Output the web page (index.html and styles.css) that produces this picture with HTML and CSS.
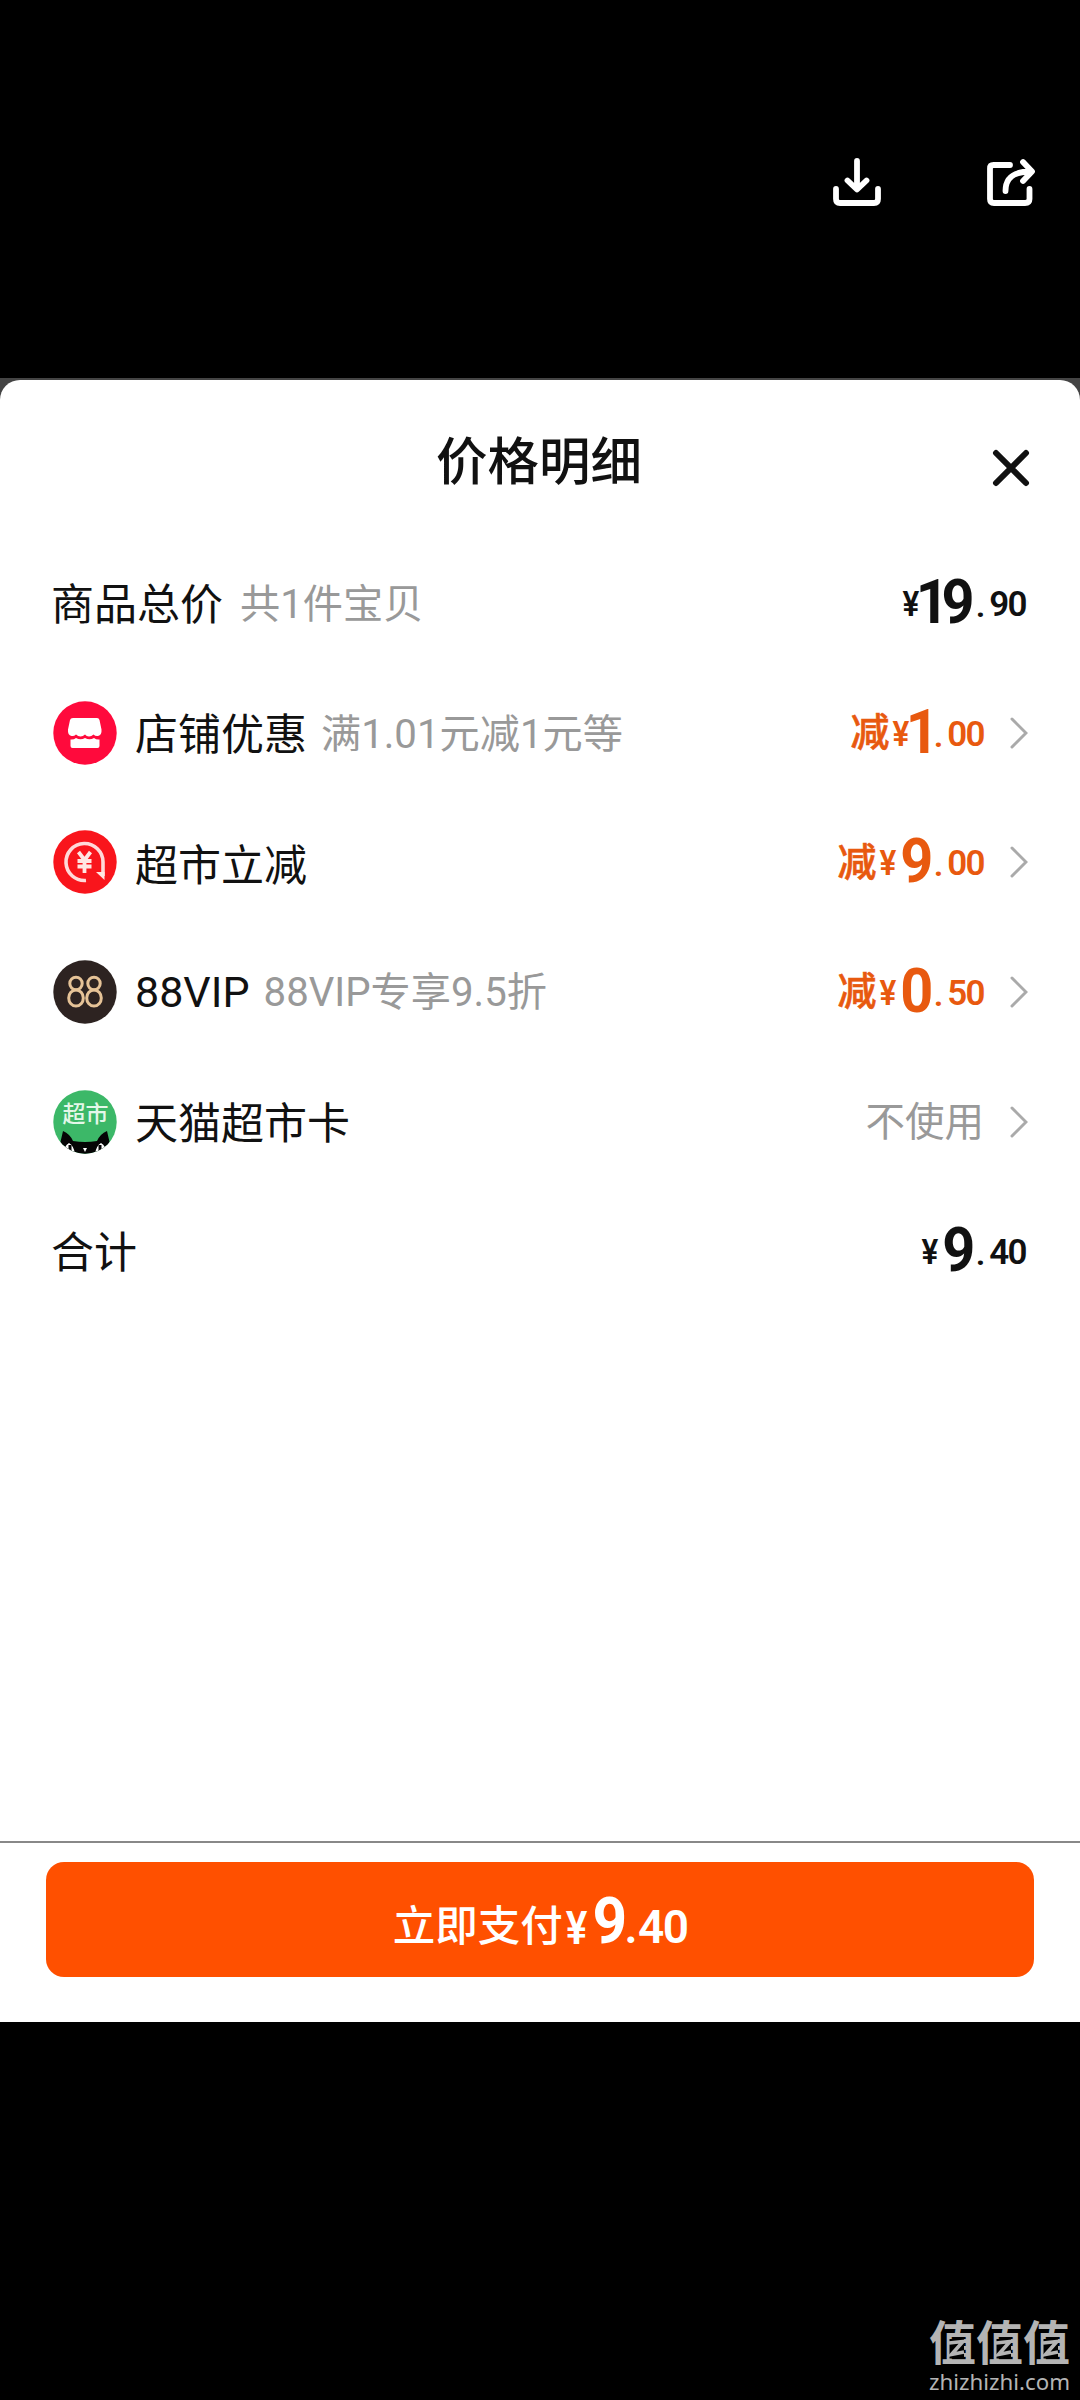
FILE: index.html
```html
<!DOCTYPE html>
<html lang="zh-CN">
<head>
<meta charset="utf-8">
<title>价格明细</title>
<link rel="stylesheet" href="styles.css">
</head>
<body>
<div class="screen">
  <header class="toolbar">
    <svg class="tool" viewBox="0 0 48 48"><path d="M24 4v28M14.500 23.500 24 32.500l9.500-9M3 32v10q0 4 4 4h34q4 0 4-4V32"/></svg>
    <svg class="tool" viewBox="0 0 48 48"><path d="M23 8H6.500Q3 8 3 11.500v30.500q0 4 4 4h31q4.500 0 4.500-4V32M18.500 34C18.500 21 26 14.500 44 14.500M36 5l9 9.500-9 9.500"/></svg>
  </header>
  <div class="backdrop">
  <main class="sheet">
    <div class="heading">
      <h1 class="title">价格明细</h1>
      <svg class="close" viewBox="0 0 38 38"><path d="M4 4l30 30M34 4 4 34"/></svg>
    </div>
    <div class="rows">
      <div class="row">
        <span class="label edge">商品总价</span><span class="note">共1件宝贝</span>
        <span class="price"><i class="yen">¥</i><b class="int pair">19</b><i class="dot">.</i><i class="dec">90</i></span>
      </div>
      <div class="row">
        <svg class="icon" viewBox="0 0 64 64"><circle cx="32" cy="32" r="31.700" fill="#ff0a3c"/><path d="M20 17h24q2 0 2.500 2l2 9.500q.5 5.500-3.500 6.500-2.500.5-4.500-1.500-2 2-4.500 2t-4-2q-2 2-4.500 2t-4.500-2q-2 2-4.500 1.500-4-1-3.500-6.500l2-9.500q.5-2 3-2z" fill="#fff"/><path d="M17.500 38.500q3 .5 5.500-1.500 4.500 2.500 9 0 4.500 2.500 9 0 2.500 2 5.500 1.500V45q0 2-2 2h-25q-2 0-2-2z" fill="#fff"/></svg>
        <span class="label">店铺优惠</span><span class="note">满1.01元减1元等</span>
        <span class="price off"><em class="cut">减</em><i class="yen">¥</i><b class="int slim">1</b><i class="dot">.</i><i class="dec">00</i></span>
        <svg class="chevron" viewBox="0 0 18 32"><path d="M2 2l14 14L2 30"/></svg>
      </div>
      <div class="row">
        <svg class="icon" viewBox="0 0 64 64"><circle cx="32" cy="32" r="31.700" fill="#f9151c"/><path d="M33 50.500A18.500 18.500 0 1 1 50 32v14" fill="none" stroke="#ffd9d9" stroke-width="3.600"/><path d="M43 42h8.500v8z" fill="#ffe6e2"/><path d="M25.500 22l6 8 6-8M31.500 30v13M24.500 31h14M24.500 36.500h14" fill="none" stroke="#ffe6e2" stroke-width="3.800"/></svg>
        <span class="label low">超市立减</span>
        <span class="price off"><em class="cut">减</em><i class="yen">¥</i><b class="int">9</b><i class="dot">.</i><i class="dec">00</i></span>
        <svg class="chevron" viewBox="0 0 18 32"><path d="M2 2l14 14L2 30"/></svg>
      </div>
      <div class="row">
        <svg class="icon" viewBox="0 0 64 64"><circle cx="32" cy="32" r="31.700" fill="#2d2321"/><g fill="none" stroke="#e6c397" stroke-width="3"><ellipse cx="23" cy="23.500" rx="6.200" ry="6.300"/><ellipse cx="23" cy="38" rx="7.300" ry="8"/><ellipse cx="41" cy="23.500" rx="6.200" ry="6.300"/><ellipse cx="41" cy="38" rx="7.300" ry="8"/></g></svg>
        <span class="label latin">88VIP</span><span class="note">88VIP专享9.5折</span>
        <span class="price off"><em class="cut">减</em><i class="yen">¥</i><b class="int">0</b><i class="dot">.</i><i class="dec">50</i></span>
        <svg class="chevron" viewBox="0 0 18 32"><path d="M2 2l14 14L2 30"/></svg>
      </div>
      <div class="row">
        <svg class="icon" viewBox="0 0 64 64"><defs><clipPath id="round"><circle cx="32" cy="32" r="31.700"/></clipPath></defs><g clip-path="url(#round)"><rect width="64" height="64" fill="#3cb868"/><path d="M7 54 10 41q7 3 10 10 12 2 24 0 3-7 10-10l3 13v10H7z" fill="#050505"/><path d="M10 64q1-8 6-11 5 3 6 11zM42 64q1-8 6-11 5 3 6 11z" fill="#fff"/><path d="M15.500 55h3v9h-3zM45.500 55h3v9h-3z" fill="#050505"/><path d="M30 58h4l-2 4z" fill="#fff"/></g><text class="badge-text" x="32.500" y="32" text-anchor="middle">超市</text></svg>
        <span class="label">天猫超市卡</span>
        <span class="unused">不使用</span>
        <svg class="chevron" viewBox="0 0 18 32"><path d="M2 2l14 14L2 30"/></svg>
      </div>
      <div class="row">
        <span class="label edge">合计</span>
        <span class="price"><i class="yen">¥</i><b class="int">9</b><i class="dot">.</i><i class="dec">40</i></span>
      </div>
    </div>
    <footer class="footer">
      <button class="pay"><span class="pay-label">立即支付</span><i class="yen">¥</i><b class="int">9</b><i class="dot">.</i><i class="dec">40</i></button>
    </footer>
  </main>
  </div>
  <div class="watermark">
    <div class="brand">值值值
      <svg class="marks" viewBox="0 0 141 50"><g id="z"><path d="M20.500 20h14.500v19.500H20.500z" fill="#000"/><path d="M20 24l14-1.500L22.500 35.500 35 33" fill="none" stroke="#b4b4b4" stroke-width="3.600"/></g><use href="#z" x="47"/><use href="#z" x="94"/></svg>
    </div>
    <span class="site">zhizhizhi.com</span>
  </div>
</div>
</body>
</html>
```
FILE: styles.css
```css
* { box-sizing: border-box; }
body { margin: 0; background: #000; }
i, em { font-style: normal; }

.screen {
  width: 1080px;
  height: 2400px;
  display: flex;
  flex-direction: column;
  overflow: hidden;
  background: #000;
  font-family: Roboto, "Noto Sans CJK SC", sans-serif;
}
.toolbar {
  height: 378px;
  padding: 157px 45px 0 0;
  display: flex;
  justify-content: flex-end;
  gap: 106px;
}
.tool { width: 48px; height: 48px; overflow: visible; fill: none; stroke: #fff; stroke-width: 5.8px; stroke-linecap: round; stroke-linejoin: round; }

.backdrop { background: #444; padding-top: 2px; height: 1644px; }
.sheet { height: 1642px; background: #fff; border-radius: 20px 20px 0 0; display: flex; flex-direction: column; }
.heading {
  height: 158px;
  padding: 0 50px 0 48px;
  display: grid;
  grid-template-columns: 38px 1fr 38px;
  align-items: center;
}
.title { grid-column: 2; margin: 8px 0 0; text-align: center; font-size: 51.500px; line-height: 60px; font-weight: 500; color: #111; }
.close { width: 38px; height: 38px; margin-top: 18px; fill: none; stroke: #111; stroke-width: 6px; stroke-linecap: round; }

.rows { flex: 1; display: flex; flex-direction: column; padding: 0 52px 0 53px; }
.row { height: 129.7px; display: flex; align-items: center; }
.icon { width: 64px; height: 64px; margin-right: 18px; flex: none; }
.badge-text { font-family: "Noto Sans CJK SC", sans-serif; font-size: 23px; font-weight: 500; fill: #e4f7e9; }
.label { margin-top: 4px; font-size: 43px; line-height: 60px; color: #111; white-space: nowrap; }
.edge { margin-left: -2px; }
.low { margin-top: 7px; }
.latin { margin-top: 0; }
.note { margin: 5px 0 0 14px; font-size: 40.200px; line-height: 60px; color: #999; white-space: nowrap; }
.edge + .note { margin-left: 17px; }
.latin + .note { margin-top: 3px; }

.price { margin-left: auto; padding-right: 2px; display: flex; align-items: center; color: #111; font-weight: 600; }
.yen { width: 20px; font-size: 35px; line-height: 40px; margin-top: 4px; display: flex; justify-content: center; transform: scaleX(.9); }
.int { font-size: 62px; line-height: 62px; font-weight: 700; letter-spacing: -3px; margin-top: -2px; transform: scaleX(.93); transform-origin: right center; }
.slim { letter-spacing: -9px; margin-left: -7px; }
.pair { letter-spacing: -8px; margin: -2px 5px 0 -9px; }
.dot { width: 17px; font-size: 34px; line-height: 40px; margin-top: 4px; display: flex; justify-content: center; }
.dec { font-size: 35px; line-height: 40px; margin-top: 4px; letter-spacing: -1.600px; }
.off { color: #e8590f; padding-right: 0; }
.cut { font-size: 39px; line-height: 40px; margin: 1px 1px 0 0; font-weight: 500; -webkit-text-stroke: .6px currentColor; }
.unused { margin: 2px 0 0 auto; font-size: 39.500px; line-height: 60px; color: #999; }
.chevron { width: 18px; height: 32px; margin-left: 26px; flex: none; fill: none; stroke: #aaa; stroke-width: 3px; stroke-linecap: round; }

.footer { height: 181px; padding: 19px 46px 0; border-top: 2px solid #888; }
.pay {
  width: 100%;
  height: 115px;
  padding: 0;
  border: 0;
  border-radius: 18px;
  display: flex;
  align-items: center;
  justify-content: center;
  background: #ff5000;
  color: #fff;
  font-family: inherit;
  font-weight: 600;
}
.pay-label { font-size: 42.500px; line-height: 60px; font-weight: 500; margin-top: 15px; }
.pay .yen { width: 27px; font-size: 46px; margin-top: 16px; transform: scaleX(.88); }
.pay .int { font-size: 65px; margin-top: 2px; }
.pay .dot { font-size: 46px; width: 14px; margin-top: 15px; }
.pay .dec { font-size: 46px; margin-top: 15px; }

.watermark { flex: 1; padding: 0 10px 5px 0; display: flex; flex-direction: column; align-items: flex-end; justify-content: flex-end; color: #b4b4b4; }
.brand { position: relative; font-size: 47px; line-height: 50px; font-weight: 700; }
.marks { position: absolute; left: 0; top: 0; width: 141px; height: 50px; }
.site { font-family: "Noto Sans", sans-serif; font-size: 22.300px; line-height: 26px; }
```
